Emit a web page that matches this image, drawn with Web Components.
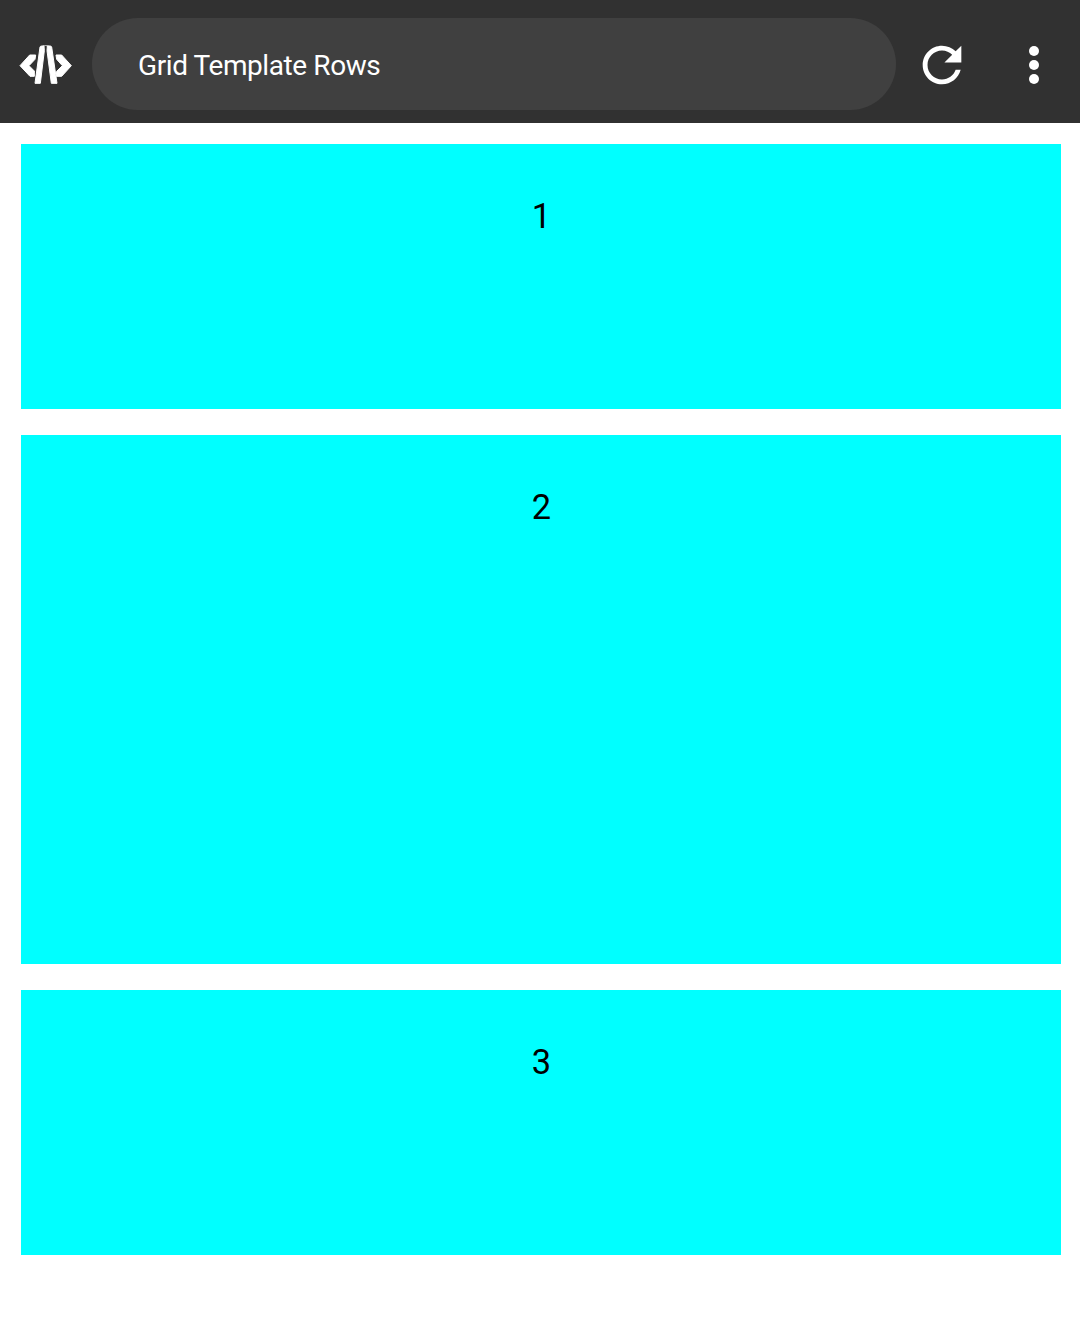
<!DOCTYPE html>
<html lang="en">
<head>
<meta charset="utf-8">
<title>Grid Template Rows</title>
<style>
html, body { margin: 0; background: #fff; font-family: Roboto, sans-serif; }
</style>
</head>
<body>
<preview-page></preview-page>
<script>
const attach = (el, html) => { el.attachShadow({ mode: 'open' }).innerHTML = html; };

customElements.define('code-logo', class extends HTMLElement {
  constructor() {
    super();
    attach(this, `<style>:host{display:block;width:75px;height:60px}svg{display:block}</style>
    <svg width="75" height="60" viewBox="0 0 225 180" fill="#fff" stroke="#fff" stroke-width="3" stroke-linejoin="round">
      <path d="M30 92 59 60H77L75 73 57 92 73 108 73 124H60Z"/>
      <path d="M184 92 155 60H138L140 73 157 92 140 109 139 124H155Z"/>
      <path d="M90 36Q91 33 95 33L102 33 103 47 91 145H75Z"/>
      <path d="M112 33 120 33Q124 33 125 36L141 145H124L111 47Z"/>
      <path d="M98 33Q107 30 116 33" fill="none" stroke-opacity=".7"/>
    </svg>`);
  }
});

customElements.define('reload-icon', class extends HTMLElement {
  constructor() {
    super();
    attach(this, `<style>:host{display:block;width:58px;height:58px}svg{display:block}</style>
    <svg width="58" height="58" viewBox="0 0 24 24" fill="#fff"><path d="M17.65 6.35C16.2 4.9 14.21 4 12 4c-4.42 0-7.99 3.58-7.99 8s3.57 8 7.99 8c3.73 0 6.84-2.55 7.73-6h-2.08c-.82 2.33-3.04 4-5.65 4-3.31 0-6-2.69-6-6s2.69-6 6-6c1.66 0 3.14.69 4.22 1.78L13 11h7V4z"/></svg>`);
  }
});

customElements.define('more-icon', class extends HTMLElement {
  constructor() {
    super();
    attach(this, `<style>:host{display:block;width:58px;height:58px}svg{display:block}</style>
    <svg width="58" height="58" viewBox="0 0 58 58" fill="#fff"><circle cx="29" cy="15" r="5"/><circle cx="29" cy="29" r="5"/><circle cx="29" cy="43" r="5"/></svg>`);
  }
});

customElements.define('title-pill', class extends HTMLElement {
  constructor() {
    super();
    attach(this, `<style>:host{display:flex;align-items:center;box-sizing:border-box;width:804px;height:92px;border-radius:46px;background:#404040;color:#fff;padding:3px 46px 0;font-size:28px;letter-spacing:-.41px;line-height:34px;white-space:nowrap}</style><span><slot></slot></span>`);
  }
});

customElements.define('app-bar', class extends HTMLElement {
  constructor() {
    super();
    attach(this, `<style>
      :host{display:flex;box-sizing:border-box;height:123px;background:#313131;padding:18px 0 0 10px;align-items:flex-start}
      code-logo{margin:17px 7px 0 0}
      reload-icon{margin:18px 0 0 17.4px}
      more-icon{margin:18px 0 0 33.6px}
    </style>
    <code-logo></code-logo><title-pill><slot></slot></title-pill><reload-icon></reload-icon><more-icon></more-icon>`);
  }
});

customElements.define('grid-cell', class extends HTMLElement {
  constructor() {
    super();
    attach(this, `<style>:host{display:block;box-sizing:border-box;background:#0ff;color:#000;text-align:center;padding:52px 0 0 1px;font-size:34.4px;line-height:40px}</style><slot></slot>`);
  }
});

customElements.define('row-grid', class extends HTMLElement {
  constructor() {
    super();
    attach(this, `<style>:host{display:grid;grid-template-rows:265px 529px 265px;row-gap:26px;padding:21px 19px 0 21px}</style><slot></slot>`);
  }
});

customElements.define('preview-page', class extends HTMLElement {
  constructor() {
    super();
    attach(this, `<style>:host{display:block;height:1341px;overflow:hidden}</style>
    <app-bar>Grid Template Rows</app-bar>
    <row-grid><grid-cell>1</grid-cell><grid-cell>2</grid-cell><grid-cell>3</grid-cell></row-grid>`);
  }
});
</script>
</body>
</html>
